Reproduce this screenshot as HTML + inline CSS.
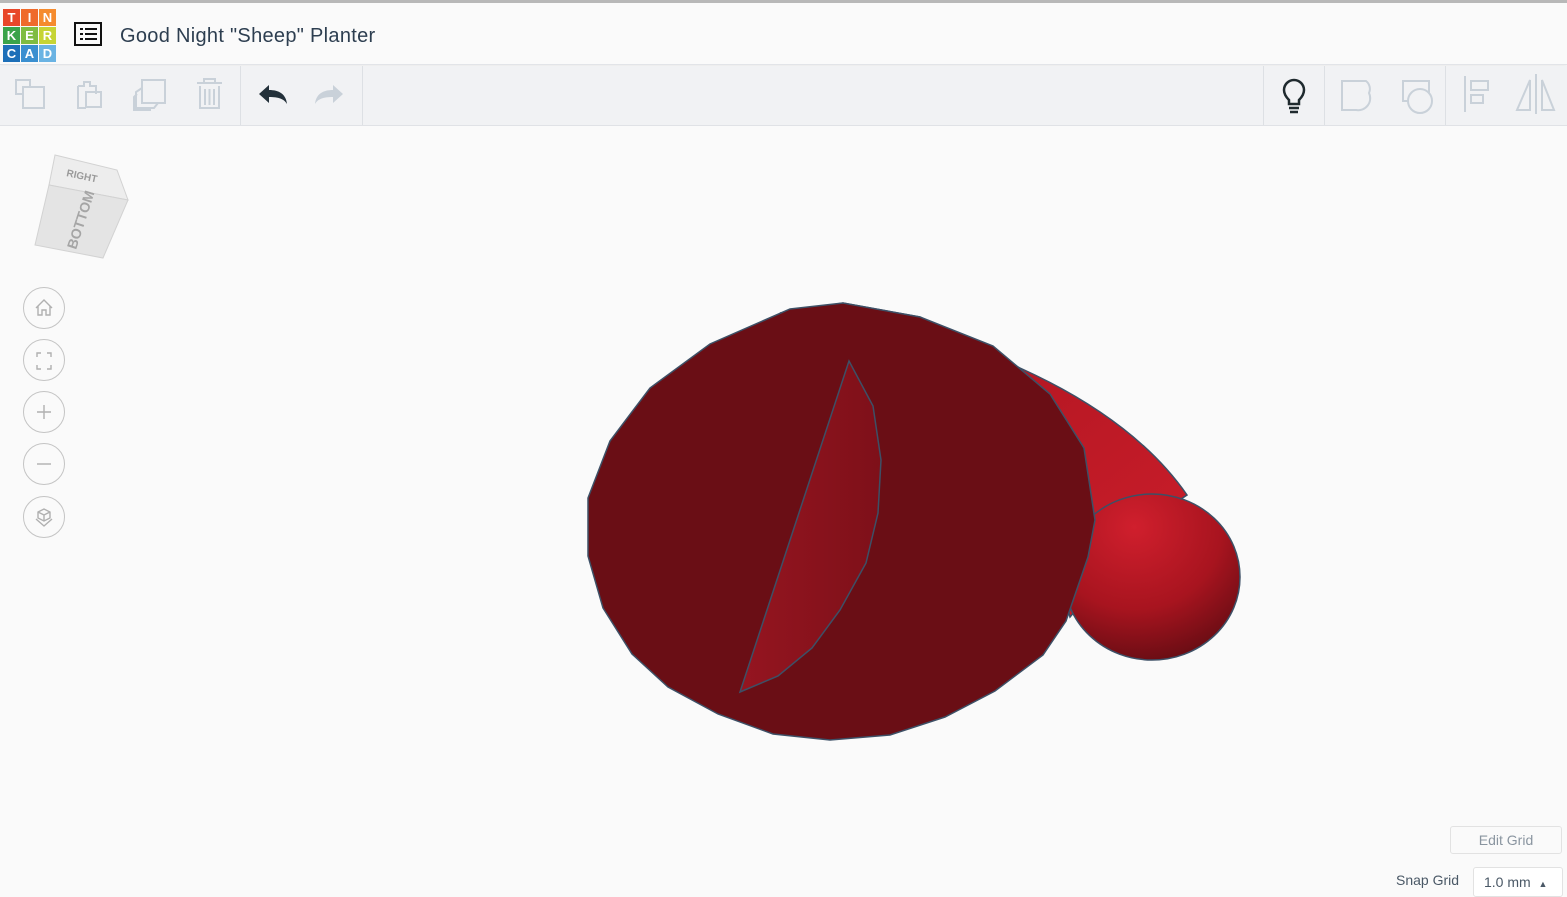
<!DOCTYPE html>
<html><head><style>
body{margin:0;width:1567px;height:892px;background:#fafafa;font-family:"Liberation Sans",sans-serif;overflow:hidden;position:relative}
.top{position:absolute;left:0;top:0;width:1567px;height:65px;background:#fafafa;border-top:3px solid #b8b8b8;box-sizing:border-box;border-bottom:1px solid #e2e4e8;box-shadow:0 1px 3px rgba(0,0,0,.08)}
.logo{position:absolute;left:3px;top:6px;display:grid;grid-template-columns:repeat(3,17px);gap:1px}
.logo div{width:17px;height:17px;color:#fff;font-weight:bold;font-size:13px;text-align:center;line-height:17px}
.title{position:absolute;left:120px;top:22px;font-size:20px;color:#2d3e50;letter-spacing:0.3px}
.tb{position:absolute;left:0;top:66px;width:1567px;height:59px;background:#f1f2f4;border-bottom:1px solid #e0e2e6}
.sep{position:absolute;top:66px;width:1px;height:59px;background:#dde0e4}
.nav{position:absolute;left:23px;width:42px;height:42px;border:1px solid #c4c4c4;border-radius:50%;box-sizing:border-box;background:#fafafa}
</style></head><body>
<div class="top">
<div class="logo">
<div style="background:#e8472a">T</div><div style="background:#ef6a2b">I</div><div style="background:#f58b2e">N</div>
<div style="background:#3aa34a">K</div><div style="background:#7fbc41">E</div><div style="background:#c6d435">R</div>
<div style="background:#1d6fb8">C</div><div style="background:#3a8fd0">A</div><div style="background:#6ab3e3">D</div>
</div>
<svg style="position:absolute;left:74px;top:19px" width="28" height="24"><rect x="1" y="1" width="26" height="22" fill="none" stroke="#111" stroke-width="2"/><g fill="#111"><rect x="6" y="6" width="3" height="2"/><rect x="11" y="6" width="12" height="2"/><rect x="6" y="11" width="3" height="2"/><rect x="11" y="11" width="12" height="2"/><rect x="6" y="16" width="3" height="2"/><rect x="11" y="16" width="12" height="2"/></g></svg>
<div class="title">Good Night "Sheep" Planter</div>
</div>
<div class="tb"></div>
<div class="sep" style="left:240px"></div><div class="sep" style="left:362px"></div>
<div class="sep" style="left:1263px"></div><div class="sep" style="left:1324px"></div><div class="sep" style="left:1445px"></div>
<svg style="position:absolute;left:0;top:66px" width="1567" height="59" fill="none" stroke="#c9d1d9" stroke-width="2">
<rect x="16" y="14" width="14" height="14"/><rect x="23" y="21" width="21" height="21" fill="#f1f2f4"/>
<path d="M78 20h6v-4h6v4h6v8M78 20v22h8"/><rect x="86" y="26" width="15" height="15"/>
<rect x="142" y="14" width="23" height="23"/><path d="M142 22l-6 4v16h18l4-5M137 28l-3 3v13h17"/>
<path d="M197 17h25M204 17v-4h11v4M200 20v22h19v-22M205 23v16M209.5 23v16M214 23v16"/>
<path d="M1342 15h24a10 10 0 0 1 3 12a12 12 0 0 1-13 17h-14z"/>
<rect x="1403" y="15" width="26" height="20"/><circle cx="1420" cy="35" r="12" fill="#f1f2f4"/>
<path d="M1465 10v36M1471 15h17v9h-17zM1471 29h12v8h-12z"/>
<path d="M1536 8v40M1530 44h-13l13-30zM1542 14v30h12z"/>
</svg>
<svg style="position:absolute;left:255px;top:80px" width="90" height="30"><path d="M4 14l10-9v5c10 0 17 4 18 14c-3-5-8-7-18-7v6z" fill="#23313a"/><path d="M88 14l-10-9v5c-10 0-17 4-18 14c3-5 8-7 18-7v6z" fill="#c9d1d9"/></svg>
<svg style="position:absolute;left:1280px;top:76px" width="30" height="40" fill="none" stroke="#1f2a2e" stroke-width="2.5"><path d="M9 24c-3-3-5-6-5-10a10 10 0 0 1 20 0c0 4-2 7-5 10v4h-10z"/><path d="M9 32h10M10 36h8"/></svg>
<!-- view cube -->
<svg style="position:absolute;left:0;top:0" width="150" height="270">
<path d="M55 155L117 170L128 200L49 185z" fill="#ededed" stroke="#d2d2d2"/>
<path d="M49 185L128 200L103 258L35 245z" fill="#e4e4e4" stroke="#d2d2d2"/>
<text x="0" y="0" font-size="10" font-weight="bold" fill="#9a9a9a" transform="translate(66 176) rotate(12)">RIGHT</text>
<text x="0" y="0" font-size="14" font-weight="bold" fill="#a5a5a5" transform="translate(76 250) rotate(-72)">BOTTOM</text>
</svg>
<div class="nav" style="top:287px"></div><div class="nav" style="top:339px"></div><div class="nav" style="top:391px"></div><div class="nav" style="top:443px"></div><div class="nav" style="top:496px"></div>
<svg style="position:absolute;left:23px;top:288px" width="42" height="250" fill="none" stroke="#b0b0b0" stroke-width="1.4">
<path d="M13 20l8-8l8 8M15 18v9h4v-5h4v5h4v-9"/>
<path d="M14 69v-4h4M24 65h4v4M28 77v4h-4M18 81h-4v-4"/>
<path d="M14 124h14M21 117v14"/>
<path d="M14 176h14"/>
<path d="M15 224l6-3l6 3v6l-6 3l-6-3zM15 224l6 3l6-3M21 227v6M13 231l8 7l8-7"/>
</svg>
<!-- model -->
<svg style="position:absolute;left:0;top:0" width="1567" height="892">
<defs>
<radialGradient id="sp" cx="0.4" cy="0.2" r="0.9"><stop offset="0" stop-color="#d01f2d"/><stop offset="0.55" stop-color="#a8141f"/><stop offset="1" stop-color="#5a0b11"/></radialGradient>
<linearGradient id="tb" x1="0" y1="0" x2="1" y2="1"><stop offset="0" stop-color="#a8131e"/><stop offset="1" stop-color="#cc1e2b"/></linearGradient>
<linearGradient id="sl" x1="0" y1="0" x2="1" y2="0"><stop offset="0" stop-color="#951520"/><stop offset="1" stop-color="#7e1019"/></linearGradient>
</defs>
<g stroke="#3d5066" stroke-width="1.5">
<path d="M780 313L843 303L920 317L1020 368Q1135 420 1187 495L1150 520L1070 617L1000 380z" fill="url(#tb)"/>
<ellipse cx="1152" cy="577" rx="88" ry="83" fill="url(#sp)"/>
<path d="M588 498L610 441L650 388L710 344L790 309L843 303L920 317L993 346L1050 394L1084 448L1095 520L1088 557L1066 621L1043 655L995 691L945 717L890 735L830 740L773 734L718 714L668 687L632 654L603 608L588 556z" fill="#6a0e15"/>
<path d="M849 361L873 406L881 460L878 513L866 563L840 610L812 648L778 676L740 692z" fill="url(#sl)"/>
</g>
</svg>
<div style="position:absolute;left:1450px;top:826px;width:112px;height:28px;border:1px solid #e2e2e2;border-radius:3px;background:#fafafa;box-sizing:border-box;font-size:14px;color:#8a95a0;text-align:center;line-height:26px">Edit Grid</div>
<div style="position:absolute;left:1396px;top:872px;font-size:14px;color:#4a5866">Snap Grid</div>
<div style="position:absolute;left:1473px;top:867px;width:90px;height:30px;border:1px solid #e2e2e2;border-radius:3px;background:#fff;box-sizing:border-box;font-size:14px;color:#4a5866;padding:6px 0 0 10px">1.0 mm &nbsp;<span style="font-size:9px">▲</span></div>
</body></html>
